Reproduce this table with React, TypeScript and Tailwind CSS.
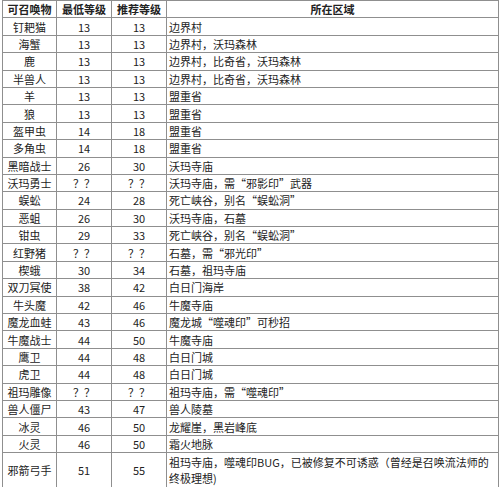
const rows: [string, string, string, string][] = [
  ["钉耙猫", "13", "13", "边界村"],
  ["海蟹", "13", "13", "边界村，沃玛森林"],
  ["鹿", "13", "13", "边界村，比奇省，沃玛森林"],
  ["半兽人", "13", "13", "边界村，比奇省，沃玛森林"],
  ["羊", "13", "13", "盟重省"],
  ["狼", "13", "13", "盟重省"],
  ["盔甲虫", "14", "18", "盟重省"],
  ["多角虫", "14", "18", "盟重省"],
  ["黑暗战士", "26", "30", "沃玛寺庙"],
  ["沃玛勇士", "？？", "？？", "沃玛寺庙，需“邪影印”武器"],
  ["蜈蚣", "24", "28", "死亡峡谷，别名“蜈蚣洞”"],
  ["恶蛆", "26", "30", "沃玛寺庙，石墓"],
  ["钳虫", "29", "33", "死亡峡谷，别名“蜈蚣洞”"],
  ["红野猪", "？？", "？？", "石墓，需“邪光印”"],
  ["楔蛾", "30", "34", "石墓，祖玛寺庙"],
  ["双刀冥使", "38", "42", "白日门海岸"],
  ["牛头魔", "42", "46", "牛魔寺庙"],
  ["魔龙血蛙", "43", "46", "魔龙城“噬魂印”可秒招"],
  ["牛魔战士", "44", "50", "牛魔寺庙"],
  ["鹰卫", "44", "48", "白日门城"],
  ["虎卫", "44", "48", "白日门城"],
  ["祖玛雕像", "？？", "？？", "祖玛寺庙，需“噬魂印”"],
  ["兽人僵尸", "43", "47", "兽人陵墓"],
  ["冰灵", "46", "50", "龙耀崖，黑岩峰底"],
  ["火灵", "46", "50", "霜火地脉"],
  [
    "邪箭弓手",
    "51",
    "55",
    "祖玛寺庙，噬魂印BUG，已被修复不可诱惑（曾经是召唤流法师的终极理想)",
  ],
];

const cell = "border border-[#8f8f8f] px-[2px] py-0 leading-[14px]";

export default function App() {
  return (
    <div className="w-[500px] h-[487px] bg-white overflow-hidden">
      <table
        className="ml-[2px] w-[497px] table-fixed border-collapse text-[11px] text-[#222]"
        style={{ fontFamily: '"Noto Sans CJK SC", "Noto Sans", sans-serif' }}
      >
        <colgroup>
          <col className="w-[54px]" />
          <col className="w-[55px]" />
          <col className="w-[55px]" />
          <col />
        </colgroup>
        <thead>
          <tr className="h-[17.4px] font-bold">
            <th className={`${cell} text-center`}>可召唤物</th>
            <th className={`${cell} text-center`}>最低等级</th>
            <th className={`${cell} text-center`}>推荐等级</th>
            <th className={`${cell} text-center`}>所在区域</th>
          </tr>
        </thead>
        <tbody>
          {rows.map((r, i) => {
            const last = i === rows.length - 1;
            return (
              <tr key={r[0]} className={last ? "h-[34.8px]" : "h-[17.4px]"}>
                <td className={`${cell} text-center whitespace-nowrap`}>{r[0]}</td>
                <td className={`${cell} text-center`}>{r[1]}</td>
                <td className={`${cell} text-center`}>{r[2]}</td>
                <td className={`${cell} text-left ${last ? "leading-[16px]" : ""}`}>
                  {r[3]}
                </td>
              </tr>
            );
          })}
        </tbody>
      </table>
    </div>
  );
}
